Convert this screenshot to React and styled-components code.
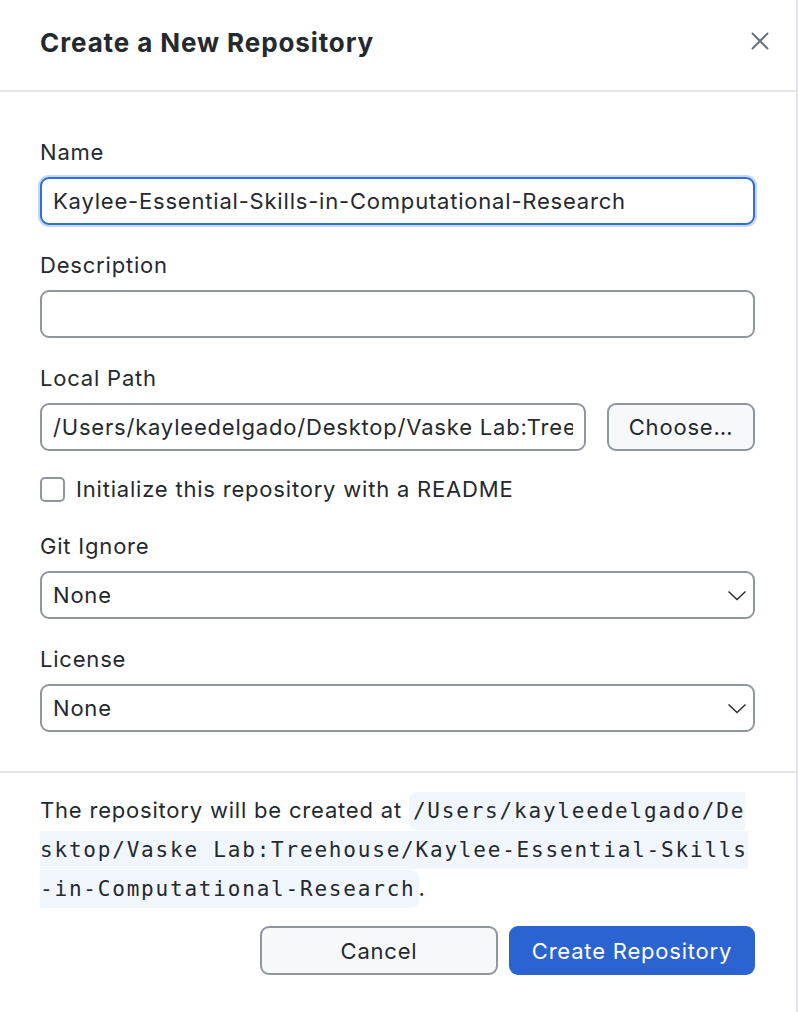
import React, { useState } from "react";
import styled, { createGlobalStyle } from "styled-components";

const GlobalStyle = createGlobalStyle`
  html, body {
    margin: 0;
    padding: 0;
    background: #ffffff;
  }
  body {
    font-family: Inter, "Noto Sans", sans-serif;
    color: #24292e;
  }
  * {
    box-sizing: border-box;
  }
`;

const textFont = `
  font-family: Inter, "Noto Sans", sans-serif;
  font-size: 22px;
  letter-spacing: 0.8px;
`;

const Dialog = styled.div`
  width: 798px;
  height: 1012px;
  background: #ffffff;
  border-right: 2px solid #e3e5e9;
  display: flex;
  flex-direction: column;
`;

const Header = styled.header`
  height: 92px;
  padding: 0 26px 6px 40px;
  display: flex;
  align-items: center;
  justify-content: space-between;
  border-bottom: 2px solid #e3e5e9;
`;

const Title = styled.h1`
  margin: 0;
  font-size: 26px;
  font-weight: 700;
  color: #24292e;
  letter-spacing: 0.9px;
`;

const CloseButton = styled.button`
  width: 20px;
  height: 20px;
  padding: 0;
  margin-top: -3px;
  border: none;
  background: transparent;
  display: flex;
  align-items: center;
  justify-content: center;
  cursor: pointer;
`;

const Body = styled.div`
  padding: 47px 41px 39px 40px;
  display: flex;
  flex-direction: column;
  border-bottom: 2px solid #e3e5e9;
`;

const Field = styled.div`
  display: flex;
  flex-direction: column;
  margin-bottom: ${(p) => p.gap ?? 27}px;
`;

const Label = styled.label`
  ${textFont}
  line-height: 26px;
  margin-bottom: 12px;
  color: #24292e;
`;

const Input = styled.input`
  ${textFont}
  height: 48px;
  width: 100%;
  min-width: 0;
  padding: 0 11px;
  color: #24292e;
  background: #ffffff;
  border: 2px solid ${(p) => (p.focused ? "#2f6fd8" : "#90969d")};
  border-radius: 9px;
  outline: none;
  box-shadow: ${(p) => (p.focused ? "0 0 0 2px rgba(47, 111, 216, 0.28)" : "none")};
`;

const PathRow = styled.div`
  display: flex;
  gap: 21px;
`;

const ChooseButton = styled.button`
  ${textFont}
  flex: 0 0 148px;
  height: 48px;
  color: #24292e;
  background: #f6f8fa;
  border: 2px solid #90969d;
  border-radius: 9px;
`;

const CheckRow = styled.label`
  ${textFont}
  display: flex;
  align-items: center;
  gap: 11px;
  height: 26px;
  margin-bottom: 31px;
`;

const Box = styled.span`
  flex: 0 0 25px;
  width: 25px;
  height: 25px;
  border: 2px solid #90969d;
  border-radius: 5px;
  background: #ffffff;
`;

const SelectWrap = styled.div`
  position: relative;
  height: 48px;
`;

const Select = styled.div`
  ${textFont}
  height: 48px;
  padding: 0 11px;
  display: flex;
  align-items: center;
  border: 2px solid #90969d;
  border-radius: 9px;
  background: #ffffff;
`;

const Chevron = styled.svg`
  position: absolute;
  right: 8px;
  top: 19px;
`;

const Footer = styled.div`
  padding: 18px 41px 0 40px;
  display: flex;
  flex-direction: column;
`;

const Note = styled.p`
  ${textFont}
  margin: 0;
  line-height: 38px;
  color: #24292e;
`;

const Code = styled.code`
  font-family: "DejaVu Sans Mono", "Liberation Mono", monospace;
  font-size: 21px;
  letter-spacing: 1.8px;
  background: #f1f6fd;
  border-radius: 8px;
  padding: 7px 3px 7px 4px;
  word-break: break-all;
  color: #24292e;
`;

const Actions = styled.div`
  margin-top: 18px;
  display: flex;
  justify-content: flex-end;
  gap: 11px;
`;

const Button = styled.button`
  ${textFont}
  height: 49px;
  width: ${(p) => p.w}px;
  border-radius: 9px;
  cursor: pointer;
  color: ${(p) => (p.primary ? "#ffffff" : "#24292e")};
  background: ${(p) => (p.primary ? "#2b64d1" : "#f6f8fa")};
  border: 2px solid ${(p) => (p.primary ? "#2b64d1" : "#90969d")};
`;

function ChevronDown() {
  return (
    <Chevron width="20" height="11" viewBox="0 0 20 11">
      <polyline points="1.5,1.5 10,9.5 18.5,1.5" fill="none" stroke="#2a2e33" strokeWidth="1.5" />
    </Chevron>
  );
}

export default function App() {
  const [name, setName] = useState("Kaylee-Essential-Skills-in-Computational-Research");
  const [description, setDescription] = useState("");
  const [path, setPath] = useState("/Users/kayleedelgado/Desktop/Vaske Lab:Treehouse");

  return (
    <>
      <GlobalStyle />
      <Dialog>
        <Header>
          <Title>Create a New Repository</Title>
          <CloseButton aria-label="Close">
            <svg width="18" height="18" viewBox="0 0 18 18">
              <path d="M1.5 1.5 L16.5 16.5 M16.5 1.5 L1.5 16.5" stroke="#6a717a" strokeWidth="2" strokeLinecap="round" />
            </svg>
          </CloseButton>
        </Header>

        <Body>
          <Field>
            <Label>Name</Label>
            <Input focused value={name} onChange={(e) => setName(e.target.value)} />
          </Field>

          <Field>
            <Label>Description</Label>
            <Input value={description} onChange={(e) => setDescription(e.target.value)} />
          </Field>

          <Field gap={25}>
            <Label>Local Path</Label>
            <PathRow>
              <Input value={path} onChange={(e) => setPath(e.target.value)} />
              <ChooseButton>Choose…</ChooseButton>
            </PathRow>
          </Field>

          <CheckRow>
            <Box />
            Initialize this repository with a README
          </CheckRow>

          <Field>
            <Label>Git Ignore</Label>
            <SelectWrap>
              <Select>None</Select>
              <ChevronDown />
            </SelectWrap>
          </Field>

          <Field gap={0}>
            <Label>License</Label>
            <SelectWrap>
              <Select>None</Select>
              <ChevronDown />
            </SelectWrap>
          </Field>
        </Body>

        <Footer>
          <Note>
            The repository will be created at{" "}
            <Code>/Users/kayleedelgado/Desktop/Vaske Lab:Treehouse/Kaylee-Essential-Skills-in-Computational-Research</Code>.
          </Note>
          <Actions>
            <Button w={238}>Cancel</Button>
            <Button primary w={246}>Create Repository</Button>
          </Actions>
        </Footer>
      </Dialog>
    </>
  );
}
